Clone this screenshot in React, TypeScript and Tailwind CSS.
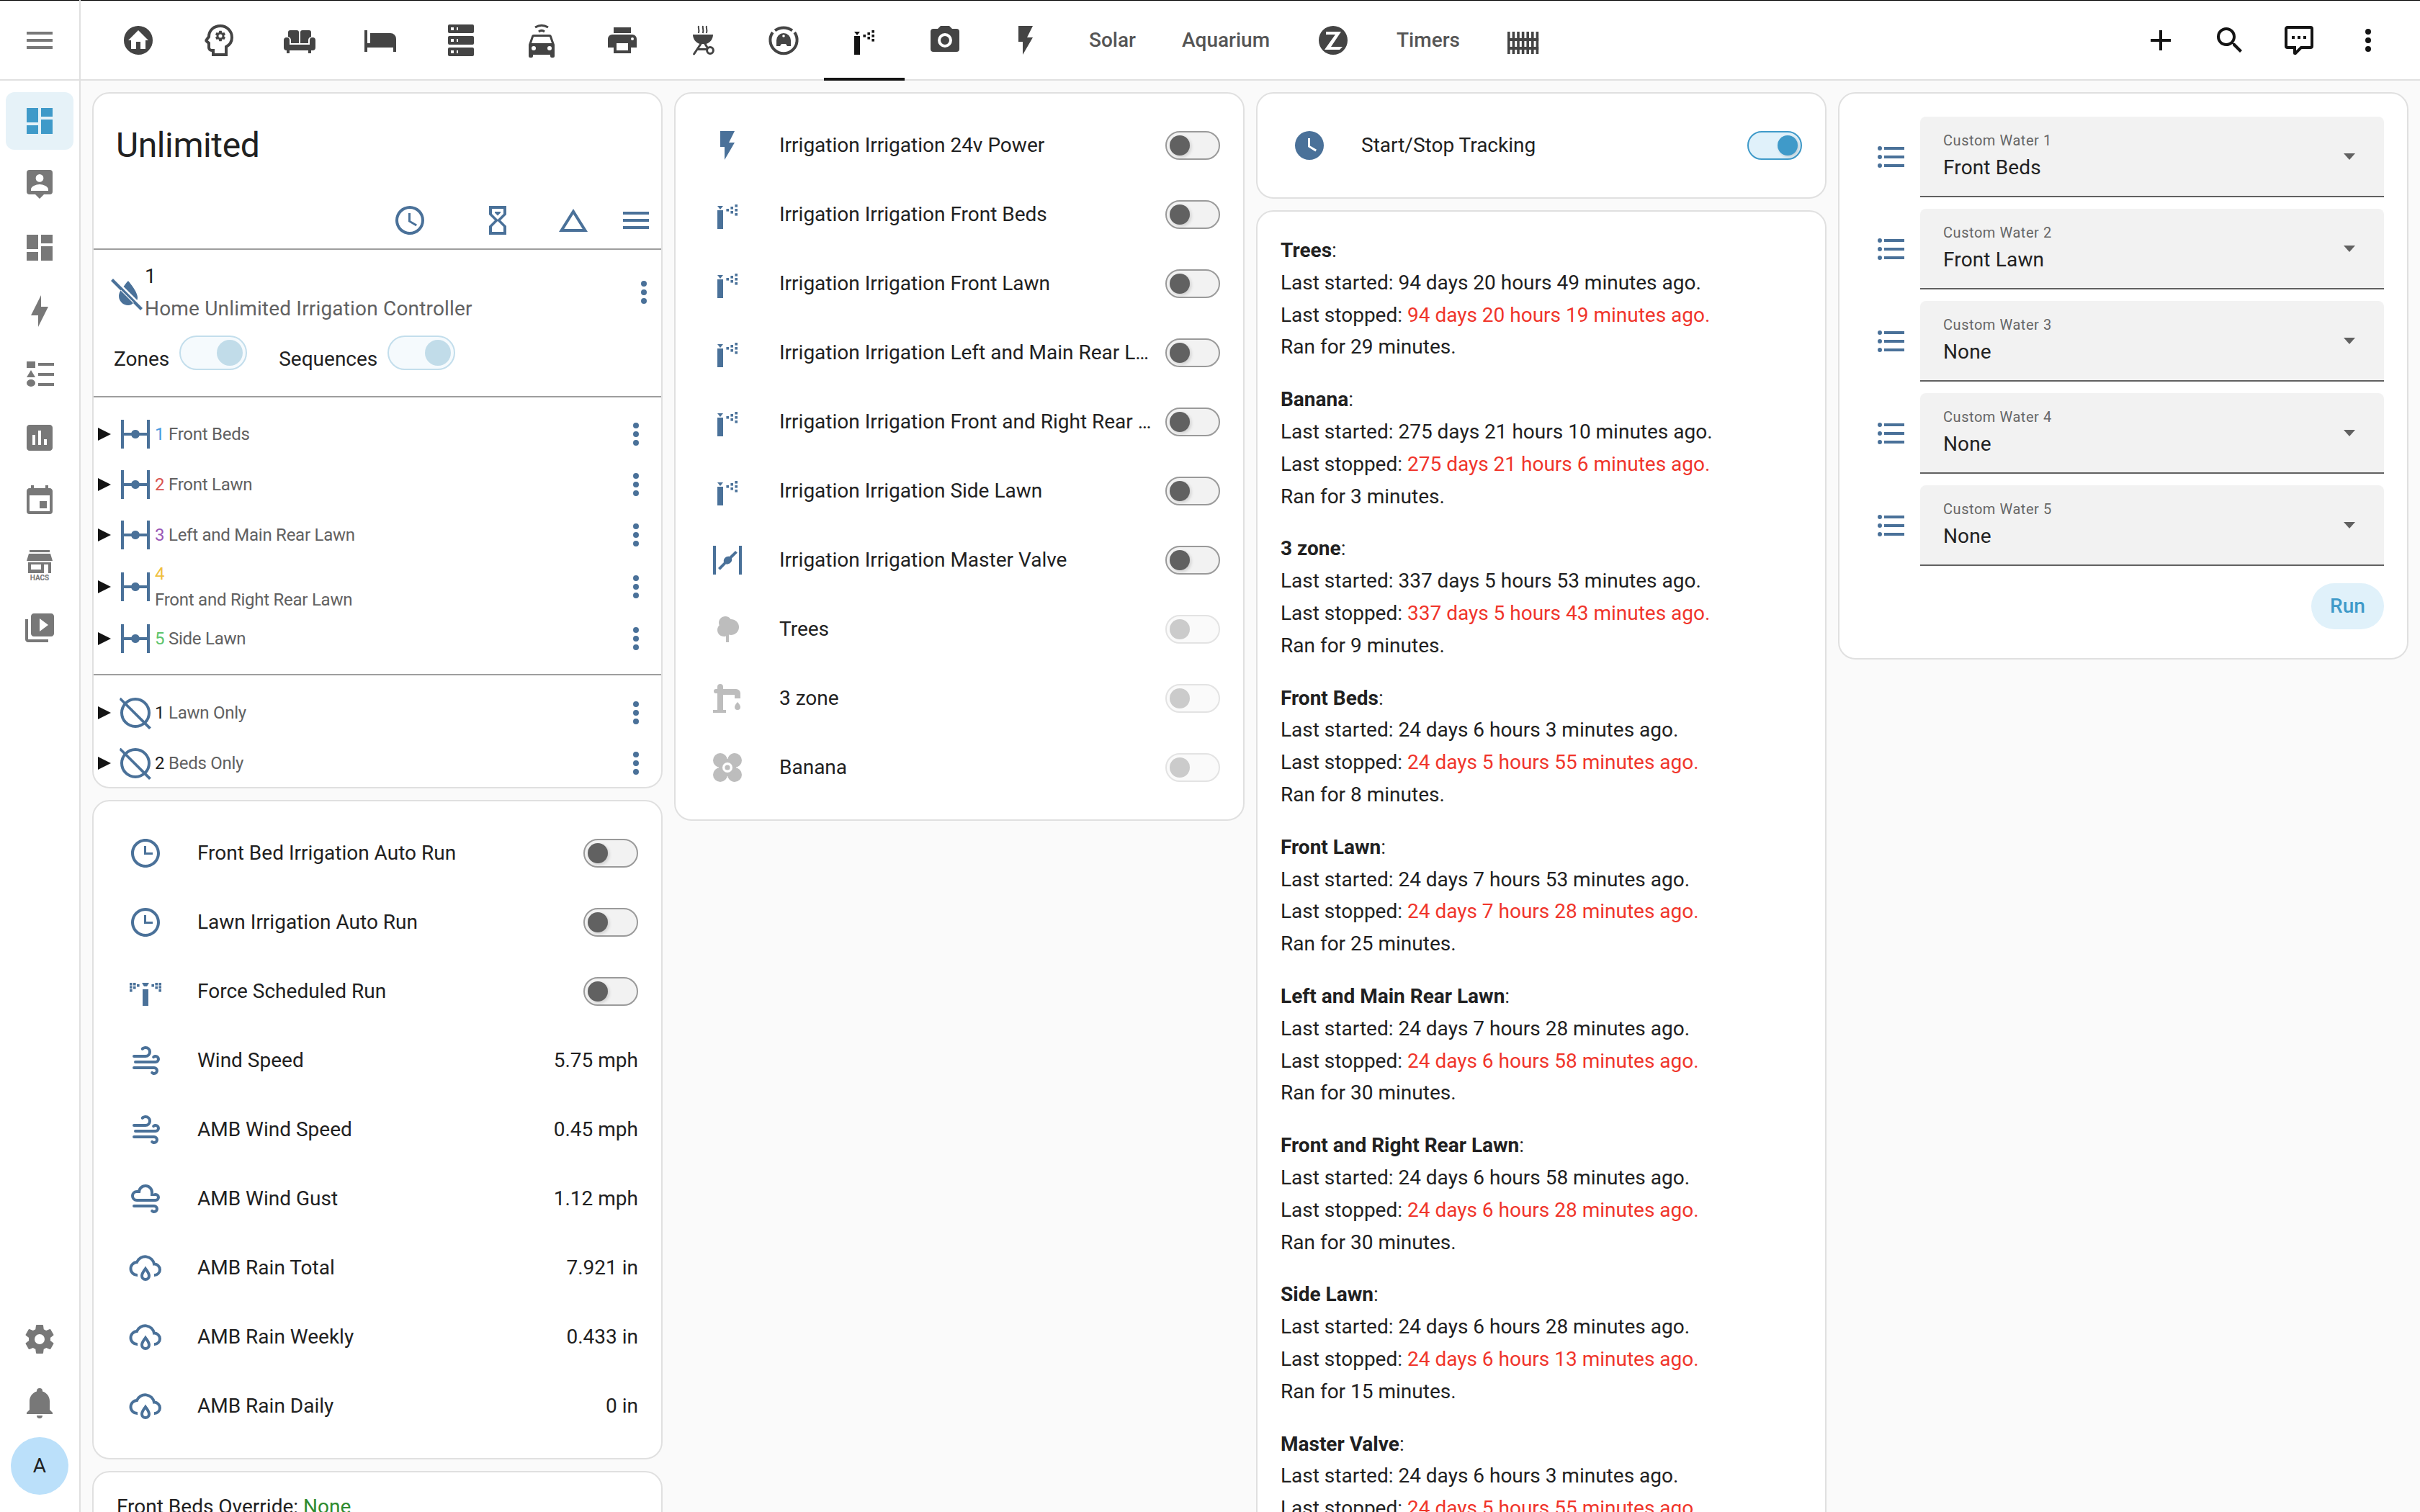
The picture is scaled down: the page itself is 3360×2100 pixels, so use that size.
import type { ReactNode } from 'react'

const p = {
  home: 'M19.07,4.93C17.22,3 14.66,1.96 12,2C9.34,1.96 6.79,3 4.94,4.93C3,6.78 1.96,9.34 2,12C1.96,14.66 3,17.21 4.93,19.06C6.78,21 9.34,22.04 12,22C14.66,22.04 17.21,21 19.06,19.07C21,17.22 22.04,14.66 22,12C22.04,9.34 21,6.78 19.07,4.93M17,12V18H13.5V13H10.5V18H7V12H5L12,5L19,12H17Z',
  sofa: 'M5.5 5h4.5a1.5 1.5 0 0 1 1.5 1.5V14H6v-2a2.5 2.5 0 0 0-2-2.4V6.5A1.5 1.5 0 0 1 5.5 5zM14 5h4.5A1.5 1.5 0 0 1 20 6.5v3.100a2.500 2.500 0 0 0-2 2.400v2h-5.500V6.500A1.500 1.500 0 0 1 14 5zM1 12a2 2 0 0 1 4 0v3h14v-3a2 2 0 0 1 4 0v5a2 2 0 0 1-2 2h-1v2h-2v-2H5v2H3v-2a2 2 0 0 1-2-2z',
  bed: 'M1 5h2v9h2V7h14a4 4 0 0 1 4 4v9h-2v-3H3v3H1z',
  server: 'M4,1H20A1,1 0 0,1 21,2V6A1,1 0 0,1 20,7H4A1,1 0 0,1 3,6V2A1,1 0 0,1 4,1M4,9H20A1,1 0 0,1 21,10V14A1,1 0 0,1 20,15H4A1,1 0 0,1 3,14V10A1,1 0 0,1 4,9M4,17H20A1,1 0 0,1 21,18V22A1,1 0 0,1 20,23H4A1,1 0 0,1 3,22V18A1,1 0 0,1 4,17M9,5H10V3H9V5M9,13H10V11H9V13M9,21H10V19H9V21M5,3V5H7V3H5M5,11V13H7V11H5M5,19V21H7V19H5Z',
  printer: 'M18,3H6V7H18M19,12A1,1 0 0,1 18,11A1,1 0 0,1 19,10A1,1 0 0,1 20,11A1,1 0 0,1 19,12M16,19H8V14H16M19,8H5A3,3 0 0,0 2,11V17H6V21H18V17H22V11A3,3 0 0,0 19,8Z',
  camera: 'M4,4H7L9,2H15L17,4H20A2,2 0 0,1 22,6V18A2,2 0 0,1 20,20H4A2,2 0 0,1 2,18V6A2,2 0 0,1 4,4M12,7A5,5 0 0,0 7,12A5,5 0 0,0 12,17A5,5 0 0,0 17,12A5,5 0 0,0 12,7M12,9A3,3 0 0,1 15,12A3,3 0 0,1 12,15A3,3 0 0,1 9,12A3,3 0 0,1 12,9Z',
  flash: 'M7,2V13H10V22L17,10H13L17,2H7Z',
  bolt: 'M11,15H6L13,1V9H18L11,23V15Z',
  plus: 'M19,13H13V19H11V13H5V11H11V5H13V11H19V13Z',
  search: 'M9.5,3A6.5,6.5 0 0,1 16,9.5C16,11.11 15.41,12.59 14.44,13.73L14.71,14H15.5L20.5,19L19,20.5L14,15.5V14.71L13.73,14.44C12.59,15.41 11.11,16 9.5,16A6.5,6.5 0 0,1 3,9.5A6.5,6.5 0 0,1 9.5,3M9.5,5C7,5 5,7 5,9.5C5,12 7,14 9.5,14C12,14 14,12 14,9.5C14,7 12,5 9.5,5Z',
  comment: 'M9,22A1,1 0 0,1 8,21V18H4A2,2 0 0,1 2,16V4C2,2.89 2.9,2 4,2H20A2,2 0 0,1 22,4V16A2,2 0 0,1 20,18H13.9L10.2,21.71C10,21.9 9.75,22 9.5,22V22H9M10,16V19.08L13.08,16H20V4H4V16H10M17,11H15V9H17V11M13,11H11V9H13V11M9,11H7V9H9V11Z',
  dots: 'M12,16A2,2 0 0,1 14,18A2,2 0 0,1 12,20A2,2 0 0,1 10,18A2,2 0 0,1 12,16M12,10A2,2 0 0,1 14,12A2,2 0 0,1 12,14A2,2 0 0,1 10,12A2,2 0 0,1 12,10M12,4A2,2 0 0,1 14,6A2,2 0 0,1 12,8A2,2 0 0,1 10,6A2,2 0 0,1 12,4Z',
  menu: 'M3,6H21V8H3V6M3,11H21V13H3V11M3,16H21V18H3V16Z',
  dashboard: 'M13,3V9H21V3M13,21H21V11H13M3,21H11V15H3M3,13H11V3H3V13Z',
  chart: 'M19 3H5C3.9 3 3 3.9 3 5V19C3 20.1 3.9 21 5 21H19C20.1 21 21 20.1 21 19V5C21 3.9 20.1 3 19 3M9 17H7V10H9V17M13 17H11V7H13V17M17 17H15V13H17V17Z',
  calendar: 'M19 19H5V8H19M16 1V3H8V1H6V3H5C3.89 3 3 3.89 3 5V19A2 2 0 0 0 5 21H19A2 2 0 0 0 21 19V5C21 3.89 20.1 3 19 3H18V1M17 12H12V17H17V12Z',
  media: 'M4 6H2V20C2 21.1 2.9 22 4 22H18V20H4V6M20 2H8C6.9 2 6 2.9 6 4V16C6 17.1 6.9 18 8 18H20C21.1 18 22 17.1 22 16V4C22 2.9 21.1 2 20 2M12 14.5V5.5L18 10L12 14.5Z',
  cog: 'M12,15.5A3.5,3.5 0 0,1 8.5,12A3.5,3.5 0 0,1 12,8.5A3.5,3.5 0 0,1 15.5,12A3.5,3.5 0 0,1 12,15.5M19.43,12.97C19.47,12.65 19.5,12.33 19.5,12C19.5,11.67 19.47,11.34 19.43,11L21.54,9.37C21.73,9.22 21.78,8.95 21.66,8.73L19.66,5.27C19.54,5.05 19.27,4.96 19.05,5.05L16.56,6.05C16.04,5.66 15.5,5.32 14.87,5.07L14.5,2.42C14.46,2.18 14.25,2 14,2H10C9.75,2 9.54,2.18 9.5,2.42L9.13,5.07C8.5,5.32 7.96,5.66 7.44,6.05L4.95,5.05C4.73,4.96 4.46,5.05 4.34,5.27L2.34,8.73C2.21,8.95 2.27,9.22 2.46,9.37L4.57,11C4.53,11.34 4.5,11.67 4.5,12C4.5,12.33 4.53,12.65 4.57,12.97L2.46,14.63C2.27,14.78 2.21,15.05 2.34,15.27L4.34,18.73C4.46,18.95 4.73,19.03 4.95,18.95L7.44,17.94C7.96,18.34 8.5,18.68 9.13,18.93L9.5,21.58C9.54,21.82 9.75,22 10,22H14C14.25,22 14.46,21.82 14.5,21.58L14.87,18.93C15.5,18.67 16.04,18.34 16.56,17.94L19.05,18.95C19.27,19.03 19.54,18.95 19.66,18.73L21.66,15.27C21.78,15.05 21.73,14.78 21.54,14.63L19.43,12.97Z',
  bell: 'M21,19V20H3V19L5,17V11C5,7.9 7.03,5.17 10,4.29C10,4.19 10,4.1 10,4A2,2 0 0,1 12,2A2,2 0 0,1 14,4C14,4.1 14,4.19 14,4.29C16.97,5.17 19,7.9 19,11V17L21,19M14,21A2,2 0 0,1 12,23A2,2 0 0,1 10,21',
  clock: 'M12,20A8,8 0 0,0 20,12A8,8 0 0,0 12,4A8,8 0 0,0 4,12A8,8 0 0,0 12,20M12,2A10,10 0 0,1 22,12A10,10 0 0,1 12,22C6.47,22 2,17.5 2,12A10,10 0 0,1 12,2M12.5,7V12.25L17,14.92L16.25,16.15L11,13V7H12.5Z',
  clockThree: 'M12 20C16.4 20 20 16.4 20 12S16.4 4 12 4 4 7.6 4 12 7.6 20 12 20M12 2C17.5 2 22 6.5 22 12S17.5 22 12 22C6.5 22 2 17.5 2 12C2 6.5 6.5 2 12 2M17 11.5V13H11V7H12.5V11.5H17Z',
  clockFill: 'M12,2A10,10 0 0,0 2,12A10,10 0 0,0 12,22A10,10 0 0,0 22,12A10,10 0 0,0 12,2M16.2,16.2L11,13V7H12.5V12.2L17,14.9L16.2,16.2Z',
  sand: 'M6,2H18V8H18V8L14,12L18,16V16H18V22H6V16H6V16L10,12L6,8V8H6V2M16,16.5L12,12.5L8,16.5V20H16V16.5M12,11.5L16,7.5V4H8V7.5L12,11.5M10,6H14V6.75L12,8.75L10,6.75V6Z',
  delta: 'M12,7.77L18.39,18H5.61L12,7.77M12,4L2,20H22',
  waterOff: 'M2.500 1.500L1 3L21.500 23.500L23 22zM13 3C13 3 19.500 10.500 19.500 14.500C19.500 15.200 19.400 15.800 19.200 16.400L9.800 7C11.300 4.800 13 3 13 3zM8 9.200L16.900 18.100A6 6 0 0 1 13 20A6.500 6.500 0 0 1 6.500 13.500C6.500 12.100 7.100 10.600 8 9.200z',
  valve: 'M22 2V22H20V13H14.8C14.4 14.2 13.3 15 12 15S9.6 14.2 9.2 13H4V22H2V2H4V11H9.2C9.6 9.8 10.7 9 12 9S14.4 9.8 14.8 11H20V2H22Z',
  valveOpen: 'M22 2V22H20V2H22M4 2V22H2V2H4M17.500 5.500L18.900 6.900L15 10.800C15.300 12 14.900 13 14.100 13.800S12.100 15 10.900 14.800L6.900 18.900L5.500 17.500L9.500 13.500C9.200 12.400 9.500 11.200 10.300 10.400S12.300 9.100 13.400 9.500Z',
  windy: 'M4,10A1,1 0 0,1 3,9A1,1 0 0,1 4,8H12A2,2 0 0,0 14,6A2,2 0 0,0 12,4C11.45,4 10.95,4.22 10.59,4.59C10.2,5 9.56,5 9.17,4.59C8.78,4.2 8.78,3.56 9.17,3.17C9.9,2.45 10.9,2 12,2A4,4 0 0,1 16,6A4,4 0 0,1 12,10H4M19,12A1,1 0 0,0 20,11A1,1 0 0,0 19,10C18.72,10 18.47,10.11 18.29,10.29C17.9,10.68 17.27,10.68 16.88,10.29C16.5,9.9 16.5,9.27 16.88,8.88C17.42,8.34 18.17,8 19,8A3,3 0 0,1 22,11A3,3 0 0,1 19,14H5A1,1 0 0,1 4,13A1,1 0 0,1 5,12H19M18,18H4A1,1 0 0,1 3,17A1,1 0 0,1 4,16H18A3,3 0 0,1 21,19A3,3 0 0,1 18,22C17.17,22 16.42,21.66 15.88,21.12C15.5,20.73 15.5,20.1 15.88,19.71C16.27,19.32 16.9,19.32 17.29,19.71C17.47,19.89 17.72,20 18,20A1,1 0 0,0 19,19A1,1 0 0,0 18,18Z',
  gust: 'M6,6L6.69,6.06C7.32,3.72 9.46,2 12,2A5.5,5.5 0 0,1 17.5,7.5L17.42,8.45C17.88,8.16 18.42,8 19,8A3,3 0 0,1 22,11A3,3 0 0,1 19,14H6A4,4 0 0,1 2,10A4,4 0 0,1 6,6M6,8A2,2 0 0,0 4,10A2,2 0 0,0 6,12H19A1,1 0 0,0 20,11A1,1 0 0,0 19,10H15.5V7.5A3.5,3.5 0 0,0 12,4A3.5,3.5 0 0,0 8.5,7.5V8H6M18,18H4A1,1 0 0,1 3,17A1,1 0 0,1 4,16H18A3,3 0 0,1 21,19A3,3 0 0,1 18,22C17.17,22 16.42,21.66 15.88,21.12C15.5,20.73 15.5,20.1 15.88,19.71C16.27,19.32 16.9,19.32 17.29,19.71C17.47,19.89 17.72,20 18,20A1,1 0 0,0 19,19A1,1 0 0,0 18,18Z',
  list: 'M7,5H21V7H7V5M7,13V11H21V13H7M4,4.5A1.5,1.5 0 0,1 5.5,6A1.5,1.5 0 0,1 4,7.5A1.5,1.5 0 0,1 2.5,6A1.5,1.5 0 0,1 4,4.5M4,10.5A1.5,1.5 0 0,1 5.5,12A1.5,1.5 0 0,1 4,13.5A1.5,1.5 0 0,1 2.5,12A1.5,1.5 0 0,1 4,10.5M7,19V17H21V19H7M4,16.5A1.5,1.5 0 0,1 5.5,18A1.5,1.5 0 0,1 4,19.5A1.5,1.5 0 0,1 2.5,18A1.5,1.5 0 0,1 4,16.5Z',
  tree: 'M11,21V16.74C10.53,16.91 10.03,17 9.5,17C7,17 5,15 5,12.5C5,11.23 5.5,10.09 6.36,9.27C6.13,8.73 6,8.13 6,7.5C6,5 8,3 10.5,3C12.06,3 13.44,3.8 14.25,5C14.33,5 14.41,5 14.5,5A5.5,5.5 0 0,1 20,10.5A5.5,5.5 0 0,1 14.5,16C14,16 13.5,15.93 13,15.79V21H11Z',
  faucet: 'M19,14.5C19,14.5 21,16.67 21,18A2,2 0 0,1 19,20A2,2 0 0,1 17,18C17,16.67 19,14.5 19,14.5M5,20V8.500H4A1.500 1.500 0 0 1 4,5.500H5V4A2,2 0 0 1 9,4V5.500H18A3,3 0 0 1 21,8.500V12H17V9.500H9V20H11V22H2V20H5Z',
  sideTodo: 'M3 3h6v4.500H3zM6 9l3 5H3zM6 15.500a3 2.500 0 1 1 0 5 3 2.500 0 0 1 0-5zM11 4h11v2H11zM11 11h11v2H11zM11 18h11v2H11z',
  sidePerson: 'M5 2h14a2 2 0 0 1 2 2v13a2 2 0 0 1-2 2h-4l-3 3-3-3H5a2 2 0 0 1-2-2V4a2 2 0 0 1 2-2zM12 5a2.700 2.700 0 1 0 0 5.400A2.700 2.700 0 0 0 12 5zM6 16.500h12v-1c0-2-3.500-3.500-6-3.500s-6 1.500-6 3.500z',
  store: 'M5 2h14v1.500H5zM4.500 4.500h15L21 9.500H3zM4 10.500h16V18h-2v-6h-3v6H4zM6 12v3.500h7V12z',
  zwave: 'M12 2A10 10 0 1 0 12 22A10 10 0 1 0 12 2ZM7 6H17.500L10.500 16.500H18.500L16.500 18.500H6L13.500 8H7Z',
}

const BLUE = 'text-[#4a7199]'

function Mdi({ d, className, size = 'w-12 h-12' }: { d: string; className?: string; size?: string }) {
  return (
    <svg viewBox="0 0 24 24" fill="currentColor" fillRule="evenodd" className={`${size} shrink-0 ${className ?? ''}`}>
      <path d={d} />
    </svg>
  )
}

function Svg({ children, className }: { children: ReactNode; className?: string }) {
  return (
    <svg viewBox="0 0 24 24" fill="currentColor" className={`w-12 h-12 shrink-0 ${className ?? ''}`}>
      {children}
    </svg>
  )
}

function Sprinkler({ className }: { className?: string }) {
  const sq = [[11.2, 8], [14.2, 6.5], [14.2, 9.5], [17.2, 5], [17.2, 8], [17.2, 11]]
  return (
    <Svg className={className}>
      <path d="M5 6h4l-2 2.500z" />
      <rect x="5" y="9" width="4" height="13" />
      {sq.map(([x, y]) => (
        <rect key={`${x}-${y}`} x={x} y={y} width="1.800" height="1.800" />
      ))}
    </Svg>
  )
}

function SprinklerWide({ className }: { className?: string }) {
  const sq = [
    [1, 6], [1, 8.200], [1, 10.500], [3.500, 6], [3.500, 8.500], [6, 7],
    [16.200, 7], [18.700, 6], [18.700, 8.500], [21.200, 6], [21.200, 8.200], [21.200, 10.500],
  ]
  return (
    <Svg className={className}>
      <path d="M9.500 6h5l-1.500 2.500h-2z" />
      <rect x="10" y="10.500" width="4" height="11.500" />
      {sq.map(([x, y]) => (
        <rect key={`${x}-${y}`} x={x} y={y} width="1.800" height="1.800" />
      ))}
    </Svg>
  )
}

function CloudDrop({ className }: { className?: string }) {
  return (
    <Svg className={className}>
      <g fill="none" stroke="currentColor" strokeWidth="2">
        <path d="M6.500 17A4.500 4.500 0 0 1 6 8 6.300 6.300 0 0 1 18 9.300 3.900 3.900 0 0 1 22 13.200 3.800 3.800 0 0 1 18 17" />
        <path d="M12 12.500c-1 1.500-2.500 3.200-2.500 5a2.500 2.500 0 0 0 5 0c0-1.800-1.500-3.500-2.500-5z" />
      </g>
    </Svg>
  )
}

function NoCircle() {
  return (
    <Svg className={BLUE}>
      <g fill="none" stroke="currentColor" strokeWidth="2">
        <circle cx="12" cy="12" r="9.500" />
      </g>
      <path d="M2 1.500h-.5L1 3l20.500 20.500 1.500-1.300z" />
    </Svg>
  )
}

function Flower({ className }: { className?: string }) {
  return (
    <Svg className={className}>
      <circle cx="7" cy="7" r="5" />
      <circle cx="17" cy="7" r="5" />
      <circle cx="7" cy="17" r="5" />
      <circle cx="17" cy="17" r="5" />
      <circle cx="12" cy="12" r="6" />
      <circle cx="12" cy="12" r="3.500" fill="#fff" />
      <circle cx="12" cy="12" r="1.800" />
    </Svg>
  )
}

function Head() {
  return (
    <Svg>
      <path
        d="M8 22v-3H7a2 2 0 0 1-2-2v-3l-1.600-1.400a.6.6 0 0 1 0-1L5 9.500C5 5 8.500 2 13 2a8 8 0 0 1 8 8c0 2.800-1.300 5-4 6.500V22z"
        fill="none"
        stroke="currentColor"
        strokeWidth="2"
      />
      <g transform="translate(13 9) scale(.36) translate(-12 -12)">
        <path d={p.cog} fillRule="evenodd" />
      </g>
    </Svg>
  )
}

function CarWifi() {
  return (
    <Svg>
      <path d="M7.500 3Q12 .2 16.500 3" fill="none" stroke="currentColor" strokeWidth="1.500" />
      <path d="M10 6Q12 4.400 14 6" fill="none" stroke="currentColor" strokeWidth="1.500" />
      <path
        fillRule="evenodd"
        d="M6.500 8h11c.7 0 1.200.4 1.400 1L21 15v8a1 1 0 0 1-1 1h-1a1 1 0 0 1-1-1v-1H6v1a1 1 0 0 1-1 1H4a1 1 0 0 1-1-1v-8l2.100-6c.2-.6.700-1 1.400-1zM6.500 9.500L5 14h14l-1.500-4.500zM6.500 16a1.500 1.500 0 1 0 0 3 1.500 1.500 0 0 0 0-3zM17.500 16a1.500 1.500 0 1 0 0 3 1.500 1.500 0 0 0 0-3z"
      />
    </Svg>
  )
}

function Grill() {
  return (
    <Svg>
      <g fill="none" stroke="currentColor" strokeWidth="1">
        <path d="M9 2c-.6 1.500.8 2-.1 5M12 2c-.6 1.500.8 2-.1 5M14.500 2c-.6 1.500.8 2-.1 5" />
      </g>
      <path d="M5 8h14c0 3.500-2.500 6-5 6.500h-4C7.500 14 5 11.500 5 8z" />
      <g fill="none" stroke="currentColor" strokeWidth="1.500" strokeLinecap="round">
        <path d="M10.500 14.500L5.800 21.500M13.500 14.500L15 17M8.500 18.300H14.800" />
        <circle cx="17" cy="19" r="2.200" />
      </g>
    </Svg>
  )
}

function Vacuum() {
  return (
    <Svg>
      <g fill="none" stroke="currentColor" strokeWidth="2">
        <path d="M6 5.200A10 10 0 0 1 18 5.200" />
        <path d="M4.400 6.500A9.300 9.300 0 1 0 19.600 6.500" />
      </g>
      <path
        fillRule="evenodd"
        d="M12 7a5 5 0 0 1 5 5v4h-2.500l-1-1.500h-3l-1 1.500H7v-4a5 5 0 0 1 5-5zM12 8.100a.9.9 0 1 0 0 1.800.9.9 0 0 0 0-1.800z"
      />
    </Svg>
  )
}

function Fence({ className }: { className?: string }) {
  const xs = [1, 4.300, 7.600, 10.900, 14.200, 17.500, 20.800]
  return (
    <Svg className={className}>
      {xs.map((x) => (
        <rect key={x} x={x} y="6" width="1.800" height="15.500" />
      ))}
      <rect x="1" y="10.500" width="21.600" height="2" />
      <rect x="1" y="16.500" width="21.600" height="2" />
    </Svg>
  )
}

function Hacs() {
  return (
    <svg viewBox="0 0 24 24" fill="currentColor" className="w-12 h-12 shrink-0">
      <path fillRule="evenodd" d={p.store} />
      <text x="12" y="23" textAnchor="middle" fontSize="5" fontWeight="700" fontFamily="Roboto, sans-serif">
        HACS
      </text>
    </svg>
  )
}

function Toggle({ state = 'off', big = false }: { state?: 'off' | 'on' | 'disabled' | 'soft'; big?: boolean }) {
  const track = {
    off: 'bg-[#f2f2f2] border-[#9a9a9a] justify-start',
    on: 'bg-[#e0f1fa] border-[#3f9ac9] justify-end',
    disabled: 'bg-[#fafafa] border-[#e3e3e3] justify-start',
    soft: 'bg-[#f5fafd] border-[#c3deec] justify-end',
  }[state]
  const thumb = {
    off: 'bg-[#616161] shadow-[2px_2px_4px_rgba(0,0,0,0.15)]',
    on: 'bg-[#3f9ac9] shadow-[2px_2px_4px_rgba(0,0,0,0.15)]',
    disabled: 'bg-[#cbcbcb]',
    soft: 'bg-[#c1dce9]',
  }[state]
  return (
    <div className={`flex items-center rounded-full border-2 shrink-0 ${track} ${big ? 'w-[94px] h-[48px] px-[4px]' : 'w-[76px] h-[40px] px-[4px]'}`}>
      <div className={`rounded-full ${thumb} ${big ? 'w-[36px] h-[36px]' : 'w-[28px] h-[28px]'}`} />
    </div>
  )
}

function Card({ children, className }: { children: ReactNode; className?: string }) {
  return <div className={`bg-white border-2 border-[#e0e0e0] rounded-[24px] ${className ?? ''}`}>{children}</div>
}

function TabIcon({ children, active }: { children: ReactNode; active?: boolean }) {
  return (
    <div className={`w-[112px] h-full flex items-center justify-center shrink-0 relative ${active ? 'text-[#141414]' : 'text-[#444444]'}`}>
      {children}
      {active && <div className="absolute left-0 right-0 bottom-[-2px] h-[4px] bg-[#141414]" />}
    </div>
  )
}

function TabText({ label }: { label: string }) {
  return <div className="px-8 h-full flex items-center text-[28px] font-medium text-[#555555] shrink-0">{label}</div>
}

function Header() {
  return (
    <div className="h-[112px] bg-white border-b-2 border-t border-t-black border-b-[#e0e0e0] flex items-center pl-6 pr-[48px] shrink-0">
      <div className="flex h-full flex-1 items-center">
        <TabIcon><Mdi d={p.home} /></TabIcon>
        <TabIcon><Head /></TabIcon>
        <TabIcon><Mdi d={p.sofa} /></TabIcon>
        <TabIcon><Mdi d={p.bed} /></TabIcon>
        <TabIcon><Mdi d={p.server} /></TabIcon>
        <TabIcon><CarWifi /></TabIcon>
        <TabIcon><Mdi d={p.printer} /></TabIcon>
        <TabIcon><Grill /></TabIcon>
        <TabIcon><Vacuum /></TabIcon>
        <TabIcon active><Sprinkler /></TabIcon>
        <TabIcon><Mdi d={p.camera} /></TabIcon>
        <TabIcon><Mdi d={p.flash} /></TabIcon>
        <TabText label="Solar" />
        <TabText label="Aquarium" />
        <TabIcon><Mdi d={p.zwave} /></TabIcon>
        <TabText label="Timers" />
        <TabIcon><Fence /></TabIcon>
      </div>
      <div className="flex items-center gap-12 text-[#141414]">
        <Mdi d={p.plus} />
        <Mdi d={p.search} />
        <Mdi d={p.comment} />
        <Mdi d={p.dots} />
      </div>
    </div>
  )
}

function Sidebar() {
  const gray = 'text-[#787878]'
  const Item = ({ children }: { children: ReactNode }) => (
    <div className={`h-[80px] flex items-center justify-center ${gray}`}>{children}</div>
  )
  return (
    <div className="w-[112px] h-full bg-white border-r-2 border-[#e0e0e0] flex flex-col shrink-0">
      <div className="h-[112px] border-b-2 border-t border-t-black border-b-[#e0e0e0] flex items-center justify-center shrink-0">
        <Mdi d={p.menu} className={gray} />
      </div>
      <div className="flex flex-col gap-2 px-2 pt-4">
        <div className="h-[80px] rounded-[12px] bg-[#e6f2f8] flex items-center justify-center text-[#3f9ac9]">
          <Mdi d={p.dashboard} />
        </div>
        <Item><Mdi d={p.sidePerson} /></Item>
        <Item><Mdi d={p.dashboard} /></Item>
        <Item><Mdi d={p.bolt} /></Item>
        <Item><Mdi d={p.sideTodo} /></Item>
        <Item><Mdi d={p.chart} /></Item>
        <Item><Mdi d={p.calendar} /></Item>
        <Item><Hacs /></Item>
        <Item><Mdi d={p.media} /></Item>
      </div>
      <div className="mt-auto flex flex-col items-center pb-[24px]">
        <Mdi d={p.cog} className={`${gray} mb-[40px]`} />
        <Mdi d={p.bell} className={`${gray} mb-[24px]`} />
        <div className="w-[80px] h-[80px] rounded-full bg-[#bbe0fa] flex items-center justify-center text-[28px] text-[#212121]">A</div>
      </div>
    </div>
  )
}

function Triangle() {
  return (
    <svg viewBox="0 0 18 18" className="w-[18px] h-[18px] shrink-0" fill="#141414">
      <path d="M0 0L18 9L0 18z" />
    </svg>
  )
}

function ZoneRow({ num, color, label, stacked, h }: { num: string; color: string; label: string; stacked?: boolean; h: string }) {
  return (
    <div className={`flex items-center pl-[6px] pr-[11px] ${h}`}>
      <Triangle />
      <div className="w-[10px] shrink-0" />
      <Mdi d={p.valve} className={BLUE} />
      <div className="flex-1 pl-[3px] text-[24px] leading-[36px] tracking-[-0.25px] text-[#616161]">
        <span className={color}>{num}</span>
        {stacked ? <br /> : ' '}
        {label}
      </div>
      <Mdi d={p.dots} className={BLUE} />
    </div>
  )
}

function SeqRow({ num, label }: { num: string; label: string }) {
  return (
    <div className="flex items-center pl-[6px] pr-[11px] h-[70px]">
      <Triangle />
      <div className="w-[10px] shrink-0" />
      <NoCircle />
      <div className="flex-1 pl-[3px] text-[24px] tracking-[-0.25px] text-[#616161]">
        <span className="text-[#212121]">{num}</span> {label}
      </div>
      <Mdi d={p.dots} className={BLUE} />
    </div>
  )
}

function UnlimitedCard() {
  return (
    <Card className="h-[967px] overflow-hidden">
      <div className="h-[217px] flex flex-col border-b-2 border-[#9e9e9e]">
        <div className="pl-[31px] pt-[44px] text-[48px] leading-[56px] tracking-[-0.4px] text-[#212121]">Unlimited</div>
        <div className="flex justify-end mt-auto pb-[15px] pr-[11px]">
          <Mdi d={p.clock} className={BLUE} />
          <Mdi d={p.sand} className={`${BLUE} ml-[74px]`} />
          <Mdi d={p.delta} className={`${BLUE} ml-[57px]`} />
          <Mdi d={p.menu} className={`${BLUE} ml-[39px]`} />
        </div>
      </div>
      <div className="h-[205px] border-b-2 border-[#9e9e9e] pt-[14px]">
        <div className="flex items-center pl-[22px] h-[90px]">
          <Mdi d={p.waterOff} className={`${BLUE} mt-[4px]`} />
          <div className="flex-1 pl-[1px] text-[28px] leading-[45px] tracking-[0.18px]">
            <div className="text-[#212121]">1</div>
            <div className="text-[#616161]">Home Unlimited Irrigation Controller</div>
          </div>
          <Mdi d={p.dots} className={BLUE} />
        </div>
        <div className="flex items-start pl-[28px] mt-[15px] text-[28px] leading-[42px] text-[#212121]">
          <span className="mr-[14px] mt-[12px]">Zones</span>
          <Toggle state="soft" big />
          <span className="ml-[44px] mr-[14px] mt-[12px]">Sequences</span>
          <Toggle state="soft" big />
        </div>
      </div>
      <div className="h-[386px] border-b-2 border-[#9e9e9e] pt-[16px]">
        <ZoneRow num="1" color="text-[#4a9be0]" label="Front Beds" h="h-[70px]" />
        <ZoneRow num="2" color="text-[#d9534f]" label="Front Lawn" h="h-[70px]" />
        <ZoneRow num="3" color="text-[#9b59b6]" label="Left and Main Rear Lawn" h="h-[70px]" />
        <ZoneRow num="4" color="text-[#f0c040]" label="Front and Right Rear Lawn" stacked h="h-[74px]" />
        <ZoneRow num="5" color="text-[#5cc46c]" label="Side Lawn" h="h-[70px]" />
      </div>
      <div className="pt-[17px]">
        <SeqRow num="1" label="Lawn Only" />
        <SeqRow num="2" label="Beds Only" />
      </div>
    </Card>
  )
}

function EntityRow({ icon, label, right }: { icon: ReactNode; label: string; right?: ReactNode }) {
  return (
    <div className="h-24 flex items-center text-[28px] text-[#212121]">
      <div className="w-24 shrink-0 flex items-center">{icon}</div>
      <div className="flex-1 min-w-0 truncate pr-[16px]">{label}</div>
      {right}
    </div>
  )
}

function SensorsCard() {
  const rows: [ReactNode, string, string][] = [
    [<Mdi d={p.windy} className={BLUE} />, 'Wind Speed', '5.75 mph'],
    [<Mdi d={p.windy} className={BLUE} />, 'AMB Wind Speed', '0.45 mph'],
    [<Mdi d={p.gust} className={BLUE} />, 'AMB Wind Gust', '1.12 mph'],
    [<CloudDrop className={BLUE} />, 'AMB Rain Total', '7.921 in'],
    [<CloudDrop className={BLUE} />, 'AMB Rain Weekly', '0.433 in'],
    [<CloudDrop className={BLUE} />, 'AMB Rain Daily', '0 in'],
  ]
  return (
    <Card className="pl-[48px] pr-[32px] py-[24px]">
      <EntityRow icon={<Mdi d={p.clockThree} className={BLUE} />} label="Front Bed Irrigation Auto Run" right={<Toggle />} />
      <EntityRow icon={<Mdi d={p.clockThree} className={BLUE} />} label="Lawn Irrigation Auto Run" right={<Toggle />} />
      <EntityRow icon={<SprinklerWide className={BLUE} />} label="Force Scheduled Run" right={<Toggle />} />
      {rows.map(([icon, label, value]) => (
        <EntityRow key={label} icon={icon} label={label} right={<span>{value}</span>} />
      ))}
    </Card>
  )
}

function SwitchesCard() {
  const zones = [
    'Irrigation Irrigation Front Beds',
    'Irrigation Irrigation Front Lawn',
    'Irrigation Irrigation Left and Main Rear Lawn',
    'Irrigation Irrigation Front and Right Rear Lawn',
    'Irrigation Irrigation Side Lawn',
  ]
  const gray = 'text-[#bdbdbd]'
  return (
    <Card className="pl-[48px] pr-[32px] py-[24px]">
      <EntityRow icon={<Mdi d={p.flash} className={BLUE} />} label="Irrigation Irrigation 24v Power" right={<Toggle />} />
      {zones.map((z) => (
        <EntityRow key={z} icon={<Sprinkler className={BLUE} />} label={z} right={<Toggle />} />
      ))}
      <EntityRow icon={<Mdi d={p.valveOpen} className={BLUE} />} label="Irrigation Irrigation Master Valve" right={<Toggle />} />
      <EntityRow icon={<Mdi d={p.tree} className={gray} />} label="Trees" right={<Toggle state="disabled" />} />
      <EntityRow icon={<Mdi d={p.faucet} className={gray} />} label="3 zone" right={<Toggle state="disabled" />} />
      <EntityRow icon={<Flower className={gray} />} label="Banana" right={<Toggle state="disabled" />} />
    </Card>
  )
}

const history: [string, string, string, string | null][] = [
  ['Trees', '94 days 20 hours 49 minutes ago.', '94 days 20 hours 19 minutes ago.', '29'],
  ['Banana', '275 days 21 hours 10 minutes ago.', '275 days 21 hours 6 minutes ago.', '3'],
  ['3 zone', '337 days 5 hours 53 minutes ago.', '337 days 5 hours 43 minutes ago.', '9'],
  ['Front Beds', '24 days 6 hours 3 minutes ago.', '24 days 5 hours 55 minutes ago.', '8'],
  ['Front Lawn', '24 days 7 hours 53 minutes ago.', '24 days 7 hours 28 minutes ago.', '25'],
  ['Left and Main Rear Lawn', '24 days 7 hours 28 minutes ago.', '24 days 6 hours 58 minutes ago.', '30'],
  ['Front and Right Rear Lawn', '24 days 6 hours 58 minutes ago.', '24 days 6 hours 28 minutes ago.', '30'],
  ['Side Lawn', '24 days 6 hours 28 minutes ago.', '24 days 6 hours 13 minutes ago.', '15'],
  ['Master Valve', '24 days 6 hours 3 minutes ago.', '24 days 5 hours 55 minutes ago.', null],
]

function HistoryCard() {
  return (
    <Card className="px-[32px] pt-[32px] pb-[32px] text-[28px] leading-[44.8px] text-[#212121]">
      {history.map(([name, started, stopped, ran]) => (
        <div key={name} className="mb-[28px]">
          <div><b className="font-bold">{name}</b>:</div>
          <div>Last started: {started}</div>
          <div>Last stopped: <span className="text-[#f0352b]">{stopped}</span></div>
          {ran && <div>Ran for {ran} minutes.</div>}
        </div>
      ))}
    </Card>
  )
}

function SelectRow({ label, value }: { label: string; value: string }) {
  return (
    <div className="flex items-center">
      <Mdi d={p.list} className={`${BLUE} mr-4`} />
      <div className="flex-1 h-[112px] bg-[#f2f2f2] rounded-t-[8px] border-b-2 border-[#616161] pl-[32px] pr-[38px] flex items-center justify-between">
        <div>
          <div className="text-[20px] leading-[24px] tracking-[0.55px] text-[#666666]">{label}</div>
          <div className="text-[28px] leading-[36px] mt-[8px] tracking-[0.15px] text-[#212121]">{value}</div>
        </div>
        <svg viewBox="0 0 20 10" className="w-[20px] h-[10px] mt-[2px]" fill="#616161">
          <path d="M2 0H18L10 9z" />
        </svg>
      </div>
    </div>
  )
}

function ScriptCard() {
  return (
    <Card className="pl-[48px] pr-[32px] pt-[32px] pb-[40px]">
      <div className="flex flex-col gap-4">
        <SelectRow label="Custom Water 1" value="Front Beds" />
        <SelectRow label="Custom Water 2" value="Front Lawn" />
        <SelectRow label="Custom Water 3" value="None" />
        <SelectRow label="Custom Water 4" value="None" />
        <SelectRow label="Custom Water 5" value="None" />
      </div>
      <div className="flex justify-end mt-6">
        <div className="h-[64px] w-[101px] rounded-full bg-[#e0f1fa] text-[#3f9ac9] text-[28px] font-medium flex items-center justify-center">Run</div>
      </div>
    </Card>
  )
}

export default function App() {
  return (
    <div className="w-[3360px] h-[2100px] overflow-hidden flex bg-[#fafafa] font-[Roboto,sans-serif]">
      <Sidebar />
      <div className="flex-1 flex flex-col min-w-0">
        <Header />
        <div className="px-4 pt-4 grid grid-cols-4 gap-4 items-start">
          <div className="flex flex-col gap-4">
            <UnlimitedCard />
            <SensorsCard />
            <Card className="pl-[32px] pr-[30px] pt-[26px] pb-[32px] text-[28px] leading-[44.8px] text-[#212121]">
              Front Beds Override: <span className="text-[#2e8b2e]">None</span>
            </Card>
          </div>
          <SwitchesCard />
          <div className="flex flex-col gap-4">
            <Card className="pl-[48px] pr-[32px] py-[24px]">
              <EntityRow icon={<Mdi d={p.clockFill} className={BLUE} />} label="Start/Stop Tracking" right={<Toggle state="on" />} />
            </Card>
            <HistoryCard />
          </div>
          <ScriptCard />
        </div>
      </div>
    </div>
  )
}
